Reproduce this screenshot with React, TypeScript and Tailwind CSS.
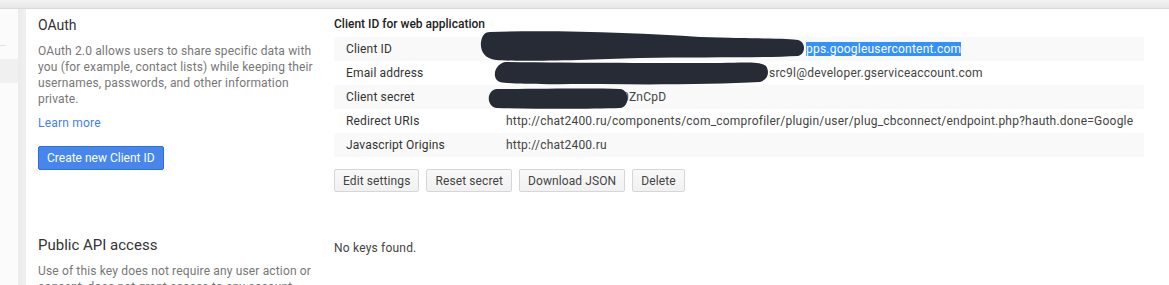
import React from "react";

type Row = {
  label: string;
  value: React.ReactNode;
};

const rows: Row[] = [
  {
    label: "Client ID",
    value: (
      <>
        <span className="inline-block w-[300px]" />
        <span className="bg-[#3390ff] text-white">pps.googleusercontent.com</span>
      </>
    ),
  },
  {
    label: "Email address",
    value: (
      <>
        <span className="inline-block w-[263px]" />
        src9l@developer.gserviceaccount.com
      </>
    ),
  },
  {
    label: "Client secret",
    value: (
      <>
        <span className="inline-block w-[116px]" />
        0ZnCpD
      </>
    ),
  },
  {
    label: "Redirect URIs",
    value:
      "http://chat2400.ru/components/com_comprofiler/plugin/user/plug_cbconnect/endpoint.php?hauth.done=Google",
  },
  { label: "Javascript Origins", value: "http://chat2400.ru" },
];

const Redactions = () => (
  <svg
    className="absolute left-0 top-0 pointer-events-none"
    width="1169"
    height="285"
    viewBox="0 0 1169 285"
  >
    <g fill="#262b35">
      <path d="M490 32 C560 30 640 33 700 37 C760 39 790 38 798 40 C806 42 806 54 798 56 C760 58 700 57 640 58 C580 60 520 62 496 60 C484 59 480 50 481 42 C482 35 485 32 490 32 Z" />
      <path d="M505 62 C580 63 660 63 720 63 C750 62 762 62 766 66 C770 72 768 80 760 82 C720 84 660 85 600 84 C550 84 515 85 500 82 C492 80 493 65 505 62 Z" />
      <path d="M497 89 C540 89 590 88 620 89 C630 90 630 107 620 108 C590 109 540 109 497 108 C486 107 486 90 497 89 Z" />
    </g>
  </svg>
);

const GrayButton = ({ children }: { children: React.ReactNode }) => (
  <button className="h-[23px] px-[8px] rounded-[2px] border border-[#d6d6d6] bg-gradient-to-b from-[#f9f9f9] to-[#f1f1f1] text-[12px] tracking-[0.1px] text-[#444] leading-none">
    {children}
  </button>
);

export default function App() {
  return (
    <div
      className="relative w-[1169px] h-[285px] overflow-hidden bg-white"
      style={{ fontFamily: "Roboto, 'Liberation Sans', sans-serif" }}
    >
      <div className="h-[9px] bg-gradient-to-b from-[#f3f3f3] to-[#e6e6e6] border-b border-[#dadada]" />
      <div className="flex h-[276px]">
        {/* sidebar */}
        <div className="w-[18px] bg-[#fbfbfb] flex flex-col">
          <div className="h-[36px]" />
          <div className="w-[6px] h-px bg-[#e3e3e3]" />
          <div className="h-[13px]" />
          <div className="h-[24px] bg-[#f0f0f0]" />
        </div>
        <div className="w-[8px] bg-gradient-to-r from-[#ebebeb] to-[#f0f0f0]" />

        {/* main */}
        <div className="flex-1 flex pl-[12px] pr-[25px]">
          <div className="w-[284px] pt-[7px]">
            <h2 className="text-[14px] leading-[18px] text-[#333]">OAuth</h2>
            <p className="mt-[9px] text-[12px] leading-[16px] tracking-[0.15px] text-[#777]">
              OAuth 2.0 allows users to share specific data with you (for
              example, contact lists) while keeping their usernames, passwords,
              and other information private.
            </p>
            <a className="block mt-[8px] text-[12px] leading-[16px] tracking-[0.2px] text-[#427fed]">
              Learn more
            </a>
            <button className="mt-[15px] h-[24px] px-[8px] rounded-[2px] border border-[#2f6fdc] bg-[#4787ed] text-white text-[12px] leading-none">
              Create new Client ID
            </button>
            <h2 className="mt-[66px] text-[15px] leading-[18px] text-[#333]">
              Public API access
            </h2>
            <p className="mt-[9px] text-[12px] leading-[16px] tracking-[0.15px] text-[#777]">
              Use of this key does not require any user action or consent, does
              not grant access to any account information.
            </p>
          </div>

          <div className="ml-[12px] flex-1 pt-[7px]">
            <div className="text-[12px] leading-[16px] text-[#222] font-medium">
              Client ID for web application
            </div>
            <div className="mt-[5px]">
              {rows.map((r, i) => (
                <div
                  key={r.label}
                  className={
                    "flex h-[24px] items-center text-[12px] whitespace-nowrap " +
                    (i % 2 === 0 ? "bg-[#f9f9f9]" : "bg-white")
                  }
                >
                  <div className="w-[172px] pl-[12px] text-[#333] tracking-[0.15px]">
                    {r.label}
                  </div>
                  <div className="text-[#444] tracking-[0.22px]">{r.value}</div>
                </div>
              ))}
            </div>
            <div className="mt-[12px] flex gap-[7px]">
              <GrayButton>Edit settings</GrayButton>
              <GrayButton>Reset secret</GrayButton>
              <GrayButton>Download JSON</GrayButton>
              <GrayButton>Delete</GrayButton>
            </div>
            <div className="mt-[48px] text-[12px] leading-[16px] tracking-[0.2px] text-[#444]">
              No keys found.
            </div>
          </div>
        </div>
      </div>
      <Redactions />
    </div>
  );
}
